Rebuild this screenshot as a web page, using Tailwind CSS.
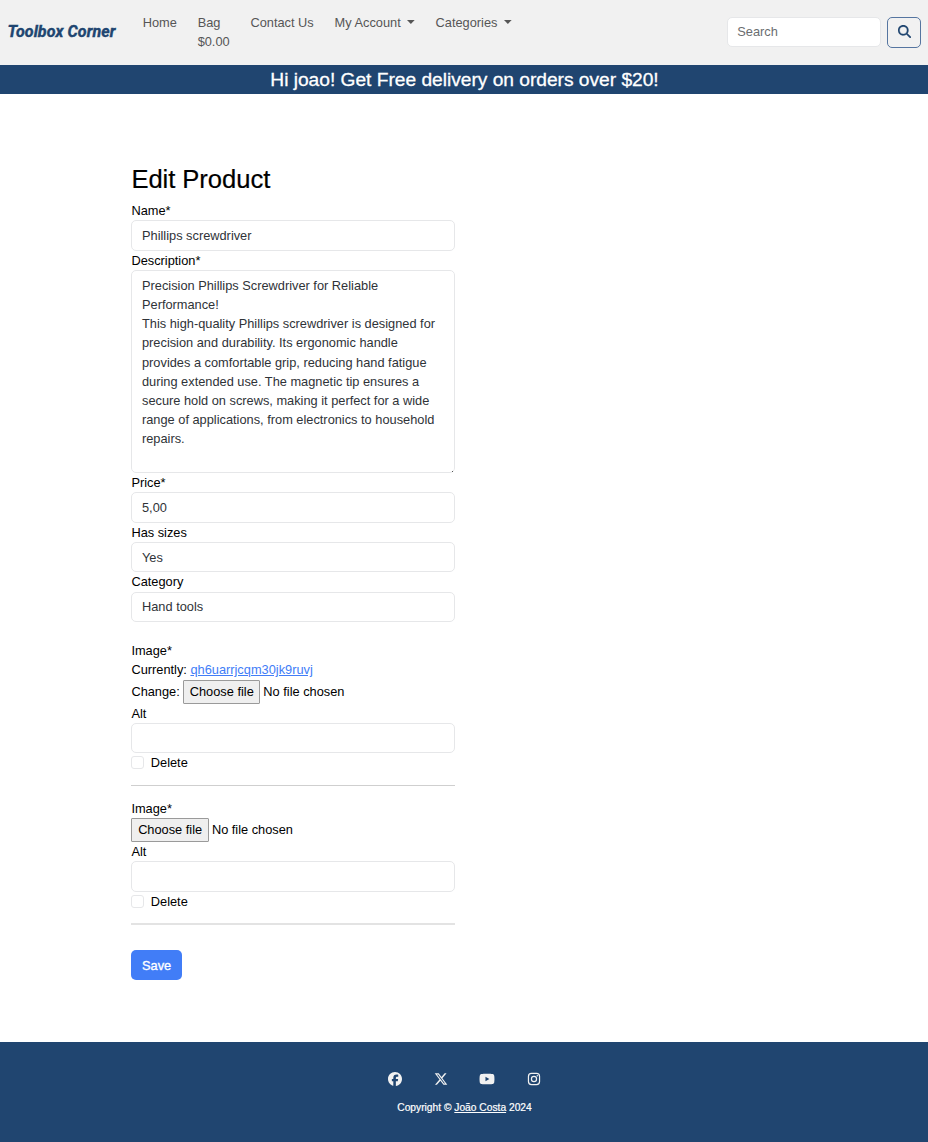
<!DOCTYPE html>
<html lang="en">
<head>
<meta charset="utf-8">
<title>Toolbox Corner - Edit Product</title>
<script src="https://cdn.jsdelivr.net/npm/@tailwindcss/browser@4"></script>
</head>
<body class="bg-white text-black text-[12.8px] leading-[19.2px] font-['Liberation_Sans',Arial,sans-serif]">
<div class="flex flex-col h-[1142px] overflow-hidden">
<header>
  <nav class="flex h-[65px] bg-[#f1f1f1] pl-[7.5px] pr-[7px] text-[#565656]">
    <a class="w-[135.2px] pt-[20px] leading-[24px] text-[16px] font-bold italic tracking-[0.12px] [-webkit-text-stroke:0.4px_#204570] text-[#204570] font-[Roboto,sans-serif] whitespace-nowrap" href="#">Toolbox Corner</a>
    <ul class="flex gap-[20.8px] pt-[13px] whitespace-nowrap">
      <li><a href="#">Home</a></li>
      <li><a href="#">Bag<br>$0.00</a></li>
      <li><a href="#">Contact Us</a></li>
      <li class="flex items-start"><a href="#">My Account</a><svg class="ml-[6.4px] mt-[7px] w-[7.7px] h-[4px]" viewBox="0 0 8 4" fill="currentColor"><path d="M0 0h8L4 4z"/></svg></li>
      <li class="flex items-start"><a href="#">Categories</a><svg class="ml-[6.4px] mt-[7px] w-[7.7px] h-[4px]" viewBox="0 0 8 4" fill="currentColor"><path d="M0 0h8L4 4z"/></svg></li>
    </ul>
    <form class="flex ml-auto gap-[6px] items-center pb-[1px]">
      <input class="w-[154.5px] h-[30.4px] bg-white border border-[#e6e7e9] rounded-[5px] px-[9.8px] placeholder:text-[#6a6d70]" placeholder="Search">
      <button type="button" class="w-[34px] h-[31px] border border-[#5575a0] rounded-[5px] flex items-center justify-center pb-px text-[#204570]" aria-label="Search">
        <svg class="size-[13px]" viewBox="0 0 512 512" fill="currentColor" stroke="currentColor" stroke-width="8"><path d="M416 208c0 45.900-14.900 88.300-40 122.700L502.600 457.400c12.500 12.500 12.500 32.800 0 45.300s-32.800 12.500-45.300 0L330.700 376c-34.400 25.200-76.800 40-122.700 40C93.100 416 0 322.900 0 208S93.100 0 208 0S416 93.100 416 208zM208 352a144 144 0 1 0 0-288 144 144 0 1 0 0 288z"/></svg>
      </button>
    </form>
  </nav>
  <div class="h-[29px] bg-[#204570] text-white text-center pl-px text-[19.2px] leading-[29px] tracking-[-0.02px] [-webkit-text-stroke:0.3px_white]">Hi joao! Get Free delivery on orders over $20!</div>
</header>
<main class="w-[323.6px] ml-[131.4px] pt-[70px] grow">
  <h1 class="text-[25.6px] leading-[30.7px] mb-[6.5px] tracking-[-0.05px] [-webkit-text-stroke:0.2px_black]">Edit Product</h1>
  <form>
    <label class="block">Name*</label>
    <input class="block w-full h-[30.4px] border border-[#e6e7e9] rounded-[5px] px-[9.6px] text-[#2f3338]" value="Phillips screwdriver">
    <label class="block">Description*</label>
    <div class="relative">
      <textarea class="block w-full h-[203.2px] border border-[#e6e7e9] rounded-[5px] px-[9.6px] py-[4.7px] text-[#2f3338] resize-none overflow-hidden">Precision Phillips Screwdriver for Reliable Performance!
This high-quality Phillips screwdriver is designed for precision and durability. Its ergonomic handle provides a comfortable grip, reducing hand fatigue during extended use. The magnetic tip ensures a secure hold on screws, making it perfect for a wide range of applications, from electronics to household repairs.</textarea>
      <span class="absolute right-[2px] bottom-px size-px bg-[#555]"></span>
    </div>
    <label class="block">Price*</label>
    <input class="block w-full h-[30.4px] border border-[#e6e7e9] rounded-[5px] px-[9.6px] text-[#2f3338]" value="5,00">
    <label class="block">Has sizes</label>
    <input class="block w-full h-[30.4px] border border-[#e6e7e9] rounded-[5px] px-[9.6px] text-[#2f3338]" value="Yes">
    <label class="block">Category</label>
    <input class="block w-full h-[30.4px] border border-[#e6e7e9] rounded-[5px] px-[9.6px] text-[#2f3338]" value="Hand tools">

    <label class="block mt-[19.3px]">Image*</label>
    <p>Currently: <a class="text-[#417df7] underline" href="#">qh6uarrjcqm30jk9ruvj</a></p>
    <div class="flex items-center h-[24px]">Change:<button type="button" class="ml-[3.4px] mr-[3px] w-[77.2px] h-[24px] bg-[#efefef] border border-[#9a9a9a] rounded-[1px]">Choose file</button>No file chosen</div>
    <label class="block">Alt</label>
    <input class="block w-full h-[30.4px] border border-[#e6e7e9] rounded-[5px] px-[9.6px]">
    <label class="flex items-center h-[19.2px]"><input type="checkbox" class="appearance-none size-[13px] border border-[#e6e7e9] rounded-[3px] mr-[6.4px]">Delete</label>
    <hr class="my-[12.8px] border-t border-[#cfcfcf]">

    <label class="block">Image*</label>
    <div class="flex items-center h-[24px] pb-px"><button type="button" class="mt-px mr-[3px] w-[77.5px] h-[24px] shrink-0 pb-px bg-[#efefef] border border-[#9a9a9a] rounded-[1px]">Choose file</button>No file chosen</div>
    <label class="block">Alt</label>
    <input class="block w-full h-[30.4px] border border-[#e6e7e9] rounded-[5px] px-[9.6px]">
    <label class="flex items-center h-[19.2px]"><input type="checkbox" class="appearance-none size-[13px] border border-[#e6e7e9] rounded-[3px] mr-[6.4px]">Delete</label>
    <hr class="mt-[12.4px] mb-[24.6px] border-t-2 border-[#e3e3e3]">
    <button type="button" class="block w-[50.4px] h-[30.4px] pt-px bg-[#417df7] text-white rounded-[5px] [-webkit-text-stroke:0.35px_white]">Save</button>
  </form>
</main>
<footer class="h-[100.4px] bg-[#204570] pt-[30px] text-[#f1f1f1]">
  <div class="flex justify-center gap-[31.5px] h-[14px] items-center pl-px">
    <svg class="size-[14px]" viewBox="0 0 512 512" fill="currentColor"><path d="M512 256C512 114.600 397.400 0 256 0S0 114.600 0 256c0 120 82.700 220.800 194.200 248.500V334.200h-52.800V256h52.800v-33.700c0-87.100 39.400-127.500 125-127.500 16.200 0 44.200 3.200 55.700 6.400V172c-6-.6-16.500-1-29.600-1-42 0-58.200 15.900-58.200 57.200V256h83.600l-14.400 78.200h-69.300v175.900C413.800 494.800 512 386.900 512 256z"/></svg>
    <svg class="size-[14px]" viewBox="0 0 512 512" fill="currentColor"><path d="M389.200 48h70.600L305.600 224.200 487 464H345L233.700 318.600 106.500 464H35.800L200.700 275.500 26.800 48H172.400L272.900 180.900 389.200 48zM364.400 421.800h39.100L151.100 88h-42L364.400 421.800z"/></svg>
    <svg class="h-[14px] w-[16px]" viewBox="0 0 576 512" fill="currentColor"><path d="M549.700 124.100c-6.300-23.700-24.800-42.300-48.300-48.600C458.800 64 288 64 288 64S117.200 64 74.600 75.500c-23.500 6.300-42 24.900-48.300 48.600C14.900 167 14.900 256.400 14.900 256.400s0 89.400 11.400 132.300c6.300 23.700 24.800 41.500 48.300 47.800C117.200 448 288 448 288 448s170.800 0 213.400-11.500c23.500-6.300 42-24.200 48.300-47.800 11.400-42.900 11.400-132.300 11.400-132.300s0-89.400-11.400-132.300zM232.200 337.600V175.200l142.700 81.200-142.700 81.200z"/></svg>
    <svg class="size-[14px]" viewBox="0 0 512 512" fill="none" stroke="currentColor" stroke-width="44"><rect x="53" y="53" width="406" height="406" rx="110"/><circle cx="256" cy="256" r="94"/><circle cx="376" cy="136" r="27" fill="currentColor" stroke="none"/></svg>
  </div>
  <p class="mt-[14px] pl-px text-center text-[10.24px] leading-[16px] text-white [-webkit-text-stroke:0.2px_white]">Copyright © <a class="underline" href="#">João Costa</a> 2024</p>
</footer>
</div>
</body>
</html>
